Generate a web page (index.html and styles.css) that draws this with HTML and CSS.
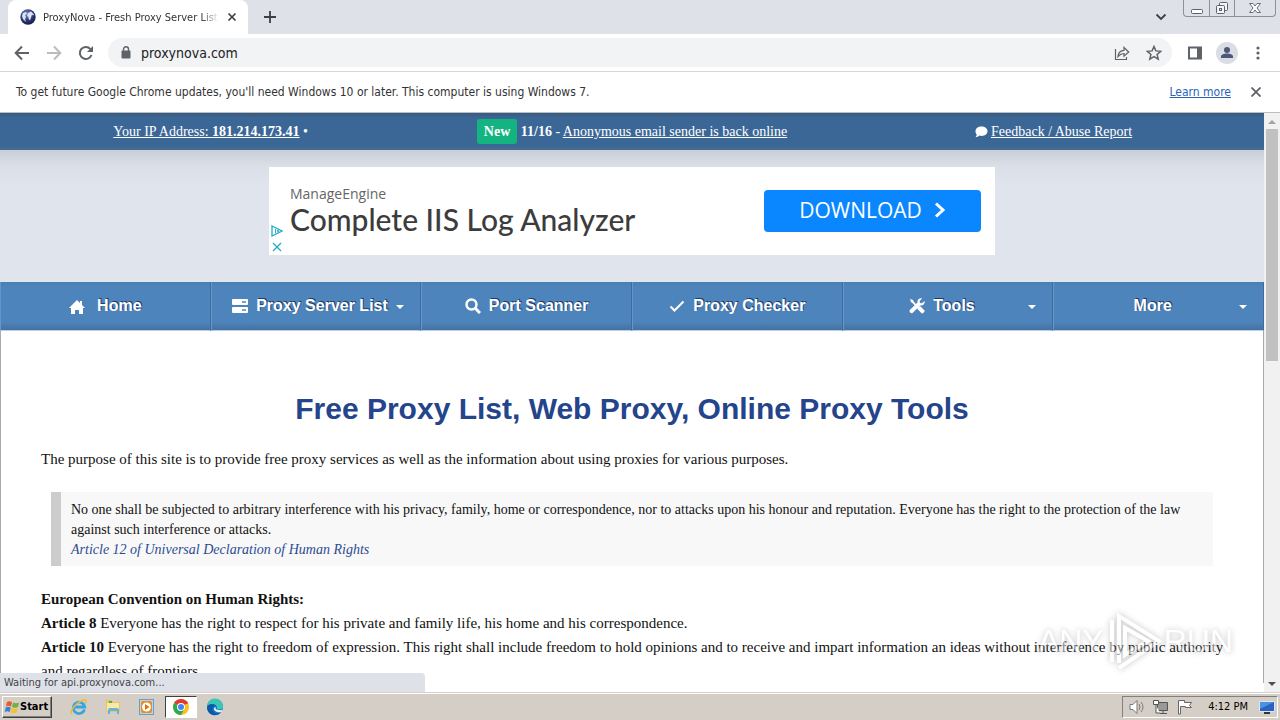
FILE: index.html
```html
<!DOCTYPE html>
<html lang="en">
<head>
    <meta charset="UTF-8">
    <meta name="viewport" content="width=device-width, initial-scale=1.0">
    <title>ProxyNova - Fresh Proxy Server List</title>
    <link rel="stylesheet" href="styles.css">
</head>
<body>
    <!-- Tab strip -->
    <header class="tab-strip">
        <div class="tab">
            <svg class="favicon" viewBox="0 0 16 16" width="16" height="16">
                <defs>
                    <radialGradient id="globe" cx="0.4" cy="0.3" r="0.7">
                        <stop offset="0" stop-color="#7385c0"/>
                        <stop offset="0.6" stop-color="#303c79"/>
                        <stop offset="1" stop-color="#171d46"/>
                    </radialGradient>
                </defs>
                <circle cx="8" cy="8" r="7.7" fill="url(#globe)"/>
                <path d="M3 4l3-1 1 2-2 1 1 2-1 2 1 3-3-3-1-3zM8 4l3-1.500 3 3-1 1-1-1-1 3-1 3-1.500-2V8L7 7z" fill="#dce5f5"/>
            </svg>
            <span class="tab-title">ProxyNova - Fresh Proxy Server List</span>
            <button class="icon-button" aria-label="Close tab">
                <svg viewBox="0 0 10 10" width="10" height="10"><path d="M1.500 1.500l7 7M8.500 1.500l-7 7" stroke="#3c4043" stroke-width="1.700"/></svg>
            </button>
        </div>
        <button class="icon-button new-tab" aria-label="New tab">
            <svg viewBox="0 0 12 12" width="12" height="12"><path d="M6 0v12M0 6h12" stroke="#3c4043" stroke-width="1.800"/></svg>
        </button>
        <button class="icon-button tab-search" aria-label="Search tabs">
            <svg viewBox="0 0 12 8" width="12" height="8"><path d="M1.500 1.500L6 6l4.500-4.500" fill="none" stroke="#3c4043" stroke-width="1.800"/></svg>
        </button>
        <div class="window-controls">
            <button aria-label="Minimize"><svg viewBox="0 0 12 14" width="12" height="14"><rect x="0.500" y="8.500" width="11" height="4" rx="1" fill="#fff" stroke="#5c616b"/></svg></button>
            <button aria-label="Restore"><svg viewBox="0 0 14 14" width="14" height="14"><g fill="#f4f5f7" stroke="#5c616b"><rect x="4.500" y="1.500" width="8" height="8" rx="1"/><rect x="1.500" y="4.500" width="8" height="8" rx="1"/><rect x="4.500" y="7.500" width="2" height="2"/></g></svg></button>
            <button aria-label="Close"><svg viewBox="0 0 14 12" width="14" height="12"><path d="M1.500 1.500h3.500l2 2.500 2-2.500h3.500l-3.500 4.500 3.500 4.500h-3.500l-2-2.500-2 2.500H1.500L5 6z" fill="#fff" stroke="#6a6f79"/></svg></button>
        </div>
    </header>

    <!-- Toolbar -->
    <div class="toolbar">
        <button class="icon-button" aria-label="Back"><svg viewBox="0 0 16 16" width="16" height="16"><path d="M15 8H2M8 1.500L1.700 8 8 14.500" fill="none" stroke="#5f6368" stroke-width="2"/></svg></button>
        <button class="icon-button" aria-label="Forward"><svg viewBox="0 0 16 16" width="16" height="16"><path d="M1 8h13M8 1.500L14.300 8 8 14.500" fill="none" stroke="#babcbe" stroke-width="2"/></svg></button>
        <button class="icon-button" aria-label="Reload"><svg viewBox="0 0 16 16" width="16" height="16"><path d="M13.500 10A6 6 0 1 1 12.300 3.900L14 5.700" fill="none" stroke="#5f6368" stroke-width="2"/><path d="M15 1v6H9z" fill="#5f6368"/></svg></button>
        <div class="omnibox">
            <svg viewBox="0 0 10 13" width="10" height="13"><path d="M2.500 5V3.300a2.500 2.500 0 0 1 5 0V5" fill="none" stroke="#5f6368" stroke-width="1.400"/><rect x="0.500" y="4.500" width="9" height="8" rx="1" fill="#5f6368"/></svg>
            <input class="url" type="text" value="proxynova.com" aria-label="Address">
            <button class="icon-button" aria-label="Share"><svg viewBox="0 0 16 16" width="16" height="16"><path d="M1.500 4v10.500h11V12M4 11.500c.4-4 2.500-6 6-6.200V2.500L14.700 7 10 11.200V8.500C7.500 8.500 6 9.300 4 11.500z" fill="none" stroke="#5f6368" stroke-width="1.200"/></svg></button>
            <button class="icon-button" aria-label="Bookmark"><svg viewBox="0 0 16 16" width="16" height="16"><path d="M8 1.500l1.900 4.400 4.800.4-3.600 3.200 1.100 4.700L8 11.700l-4.200 2.500 1.100-4.700L1.300 6.300l4.800-.4z" fill="none" stroke="#5f6368" stroke-width="1.500"/></svg></button>
        </div>
        <div class="toolbar-end">
            <button class="icon-button" aria-label="Side panel"><svg viewBox="0 0 14 14" width="14" height="14"><path d="M1 1.500h12v11H1z" fill="none" stroke="#5f6368" stroke-width="2"/><path d="M9 1h5v12H9z" fill="#5f6368"/></svg></button>
            <button class="icon-button" aria-label="Profile"><svg viewBox="0 0 22 22" width="22" height="22"><circle cx="11" cy="11" r="11" fill="#dadde3"/><circle cx="11" cy="8" r="3" fill="#4c587a"/><path d="M5 16v-1.500c0-2 3-3 6-3s6 1 6 3V16z" fill="#4c587a"/></svg></button>
            <button class="icon-button menu-button" aria-label="Menu"><svg viewBox="0 0 4 14" width="4" height="14" fill="#5f6368"><circle cx="2" cy="2" r="1.600"/><circle cx="2" cy="7" r="1.600"/><circle cx="2" cy="12" r="1.600"/></svg></button>
        </div>
    </div>

    <!-- Update notice -->
    <div class="infobar">
        <span>To get future Google Chrome updates, you'll need Windows 10 or later. This computer is using Windows 7.</span>
        <a href="#" class="learn-more">Learn more</a>
        <button class="icon-button" aria-label="Dismiss"><svg viewBox="0 0 10 10" width="10" height="10"><path d="M.5.5l9 9M9.500.5l-9 9" stroke="#5f6368" stroke-width="1.800"/></svg></button>
    </div>

    <div class="viewport">
        <main class="page">
            <div class="top-bar">
                <div><a href="#">Your IP Address: <b>181.214.173.41</b></a> •</div>
                <div><span class="badge">New</span> <b>11/16</b> - <a href="#">Anonymous email sender is back online</a></div>
                <div><svg viewBox="0 0 13 12" width="13" height="12"><path d="M6.500.5c3.400 0 6 2 6 4.700s-2.600 4.700-6 4.700c-.8 0-1.500-.1-2.200-.3C3.300 10.500 2 11.200.5 11.200c.8-.8 1.300-1.700 1.300-2.600C.9 7.700.5 6.500.5 5.200.5 2.500 3.100.5 6.500.5z" fill="#fff"/></svg> <a href="#">Feedback / Abuse Report</a></div>
            </div>

            <div class="banner">
                <div class="ad">
                    <div class="ad-choices">
                        <svg viewBox="0 0 12 12" width="12" height="12"><path d="M1 1l10 5-10 5z" fill="none" stroke="#22a9c9" stroke-width="1.300"/><path d="M4.500 4v4M6 5.200l2 .8-2 1" fill="none" stroke="#22a9c9"/></svg>
                        <svg viewBox="0 0 12 12" width="12" height="12"><path d="M2 2l8 8M10 2l-8 8" stroke="#22a9c9" stroke-width="1.300"/></svg>
                    </div>
                    <div class="ad-text">
                        <div class="ad-brand">ManageEngine</div>
                        <div class="ad-title">Complete IIS Log Analyzer</div>
                    </div>
                    <button class="download">DOWNLOAD
                        <svg viewBox="0 0 12 16" width="12" height="16"><path d="M2 1.500L9 8l-7 6.500" fill="none" stroke="#fff" stroke-width="3"/></svg>
                    </button>
                </div>
            </div>

            <nav class="menu">
                <a href="#"><span class="label home"><svg viewBox="0 0 16 16" width="16" height="16"><path d="M8 2L0 10h2v6h4v-4h4v4h4v-6h2l-3-3V3h-2v2z" fill="#fff"/></svg>Home</span></a>
                <a href="#" class="has-caret"><span class="label"><svg viewBox="0 0 16 16" width="16" height="16"><rect y="1" width="16" height="6" rx="1" fill="#fff"/><rect y="9" width="16" height="6" rx="1" fill="#fff"/><path d="M10 4h4M10 12h4" stroke="#4e84bc" stroke-width="1.500"/></svg>Proxy Server List</span><span class="caret"></span></a>
                <a href="#"><span class="label"><svg viewBox="0 0 16 16" width="16" height="16"><circle cx="6.500" cy="6.500" r="5" fill="none" stroke="#fff" stroke-width="2.400"/><path d="M10 10l5 5" stroke="#fff" stroke-width="3"/></svg>Port Scanner</span></a>
                <a href="#"><span class="label"><svg viewBox="0 0 16 16" width="16" height="16"><path d="M1.500 8.500L5.500 12.500l9-9" fill="none" stroke="#fff" stroke-width="2"/></svg>Proxy Checker</span></a>
                <a href="#" class="has-caret"><span class="label"><svg viewBox="0 0 16 16" width="16" height="16"><path d="M1 1l3 1 1 2 9 9-1.500 2L4 5.500 2 4z" fill="#fff"/><path d="M9.500 9l1.500-1 4.500 4.500c.8 1-1.800 3.500-2.800 2.800L8.500 11z" fill="#fff"/><path d="M15.500 3l-2.500 2.300-2-.3-.3-2L13 .5C10.500-.3 8 1.800 8.500 4.500L.8 12c-1 1.500 1 4 2.700 3l7.700-7.500c2.800.5 5-1.800 4.300-4.500z" fill="#fff"/></svg>Tools</span><span class="caret"></span></a>
                <a href="#" class="has-caret"><span class="label">More</span><span class="caret"></span></a>
            </nav>

            <div class="content">
                <h1>Free Proxy List, Web Proxy, Online Proxy Tools</h1>
                <p>The purpose of this site is to provide free proxy services as well as the information about using proxies for various purposes.</p>
                <blockquote>
                    No one shall be subjected to arbitrary interference with his privacy, family, home or correspondence, nor to attacks upon his honour and reputation. Everyone has the right to the protection of the law against such interference or attacks.
                    <a href="#">Article 12 of Universal Declaration of Human Rights</a>
                </blockquote>
                <p>
                    <b>European Convention on Human Rights:</b><br>
                    <b>Article 8</b> Everyone has the right to respect for his private and family life, his home and his correspondence.<br>
                    <b>Article 10</b> Everyone has the right to freedom of expression. This right shall include freedom to hold opinions and to receive and impart information an ideas without interference by public authority and regardless of frontiers.
                </p>
            </div>
        </main>

        <div class="scrollbar">
            <span class="arrow-up"></span>
            <span class="thumb"></span>
            <span class="arrow-down"></span>
        </div>

        <div class="status">Waiting for api.proxynova.com...</div>

        <div class="watermark">
            <span>ANY</span>
            <svg viewBox="0 0 60 66" width="60" height="66"><path d="M8 12v42M15 55V8l40 25-40 27M21 20v27l23-14z" fill="none" stroke="#fff" stroke-width="4"/></svg>
            <span>RUN</span>
        </div>
    </div>

    <!-- Taskbar -->
    <footer class="taskbar">
        <button class="start">
            <svg viewBox="0 0 16 16" width="16" height="16"><path d="M3 3c2-1 3-1 5 0L7 7.500c-2-1-3-1-5 0z" fill="#e85b22"/><path d="M9 3.500c2 1 4 1 6 0L14 8c-2 1-4 1-6 0z" fill="#6db33f"/><path d="M1.700 8.500c2-1 3-1 5 0l-1 4.500c-2-1-3-1-5 0z" fill="#3b7fd4"/><path d="M7.700 9c2 1 4 1 6 0l-1 4.500c-2 1-4 1-6 0z" fill="#f6c12c"/></svg>
            Start
        </button>
        <div class="tasks">
            <button aria-label="Internet Explorer"><svg viewBox="0 0 18 18" width="18" height="18"><path d="M14.500 11.500A5.700 5.700 0 1 1 14.700 9H5" fill="none" stroke="#35a6e0" stroke-width="2.800"/><path d="M2 16C-1 13 6 5 12 2.500c4-1.700 5 0 3.500 3" fill="none" stroke="#efb93a" stroke-width="1.500"/></svg></button>
            <button aria-label="Explorer"><svg viewBox="0 0 18 18" width="18" height="18"><path d="M2 2h6l1 2h7v10H2z" fill="#e9c75d"/><path d="M3 5h12v8H3z" fill="#f9e9a7"/><path d="M4 16v-4q0-2 2-2h7q2 0 2 2v4h-2v-3H6v3z" fill="#65b4df"/><path d="M5 4h3" stroke="#56a65b" stroke-width="2"/></svg></button>
            <button aria-label="Media Player"><svg viewBox="0 0 18 18" width="18" height="18"><rect x="1.500" y="1.500" width="14" height="15" fill="#b6d4eb" stroke="#6c9fc7"/><rect x="3" y="3" width="11" height="12" rx="2" fill="#f28a1c"/><circle cx="8.500" cy="9" r="4.500" fill="#fff"/><path d="M7 6l4.500 3L7 12z" fill="#e76f0b"/></svg></button>
            <button class="active" aria-label="Chrome"><svg viewBox="0 0 18 18" width="18" height="18"><circle cx="9" cy="9" r="8" fill="#fbc116"/><path d="M9 9L2.100 5A8 8 0 0 1 15.900 5z" fill="#e33b2e"/><path d="M9 9L2.100 5A8 8 0 0 0 9 17l3.500-6z" fill="#2da94f"/><path d="M9 5h6.900" stroke="#e33b2e"/><circle cx="9" cy="9" r="4" fill="#fff"/><circle cx="9" cy="9" r="3" fill="#4286f5"/></svg></button>
            <button aria-label="Edge"><svg viewBox="0 0 18 18" width="18" height="18"><circle cx="9" cy="9" r="8" fill="#1676cd"/><path d="M1 9a8 8 0 0 1 16-1c.2 3-2 4-5 3.500-1.500-.3-1-1.500-1-2.500C11 6 4 4 1 9z" fill="#3bc6b4"/><path d="M1 9c2-4 7-3.500 9-1-3-.5-4.500 2-3 5s5 3 8 1c-4 6-14 3.500-14-5z" fill="#0c59a4"/><path d="M10.500 8.500c-2 1-1.500 4.500 6 3.500l-1 2c-4 1-8-1-7.500-4z" fill="#e8f3fa"/></svg></button>
        </div>
        <div class="tray">
            <svg viewBox="0 0 16 16" width="16" height="16"><path d="M1 5.500h3l4-4v13l-4-4H1z" fill="#fff" stroke="#777"/><path d="M10 5q2 3 0 6M12 3q4 5 0 10" fill="none" stroke="#777"/></svg>
            <svg viewBox="0 0 16 16" width="16" height="16"><path d="M4.500 3.500h10v8h-10zM7 14.500h7M10 12v2" fill="#999" stroke="#555"/><path d="M.5 1.500h5v4h-5zM3 6v8h4" fill="#fff" stroke="#555"/></svg>
            <svg viewBox="0 0 16 16" width="16" height="16"><path d="M1.500 15V1.500h6v2h7l-2 3 2 2h-6v-1h-5V15z" fill="#fff" stroke="#666"/></svg>
            <time>4:12 PM</time>
            <svg viewBox="0 0 16 14" width="16" height="14"><path d="M.5 1.500h15v10H.5z" fill="#2863c4" stroke="#dce7f5"/><path d="M1 2h14L1 9z" fill="#4e90df"/><path d="M5 13h6" stroke="#333" stroke-width="2"/></svg>
        </div>
    </footer>
</body>
</html>
```
FILE: styles.css
```css
* {
    box-sizing: border-box;
}
body {
    margin: 0;
    height: 100vh;
    display: flex;
    flex-direction: column;
    overflow: hidden;
    font-family: "DejaVu Sans Condensed", "DejaVu Sans", sans-serif;
    font-size: 12px;
    color: #333;
    background: #fff;
}
button {
    padding: 0;
    border: 0;
    background: none;
    font: inherit;
    color: inherit;
}
svg {
    flex: none;
}
.icon-button {
    display: flex;
    align-items: center;
}

/* browser window */
.tab-strip {
    flex: none;
    display: flex;
    align-items: center;
    height: 34px;
    padding-left: 8px;
    background: #dee1e8;
}
.tab {
    display: flex;
    align-items: center;
    align-self: stretch;
    width: 240px;
    padding: 0 11px 0 12px;
    border-radius: 8px 8px 0 0;
    background: #fff;
}
.tab-title {
    flex: 1;
    margin: 0 8px 0 7px;
    overflow: hidden;
    white-space: nowrap;
    font-size: 11px;
    -webkit-mask-image: linear-gradient(to right, #000 90%, transparent);
    mask-image: linear-gradient(to right, #000 90%, transparent);
}
.new-tab {
    margin-left: 16px;
}
.tab-search {
    margin-left: auto;
}
.window-controls {
    display: flex;
    align-self: flex-start;
    height: 17px;
    margin: 0 4px 0 16px;
    border: 1px solid #8b909b;
    border-top: 0;
    border-radius: 0 0 4px 4px;
}
.window-controls button {
    display: flex;
    align-items: center;
    justify-content: center;
    width: 25px;
}
.window-controls button + button {
    border-left: 1px solid #8b909b;
}
.window-controls button:last-child {
    width: 41px;
}
.toolbar {
    flex: none;
    display: flex;
    align-items: center;
    gap: 16px;
    height: 38px;
    padding: 0 20px 0 14px;
    border-bottom: 1px solid #d5d7db;
}
.toolbar-end {
    display: flex;
    align-items: center;
    gap: 14px;
}
.menu-button {
    margin-left: 4px;
}
.omnibox {
    flex: 1;
    display: flex;
    align-items: center;
    gap: 10px;
    height: 29px;
    margin-left: -2px;
    padding: 0 10px 0 13px;
    border-radius: 15px;
    background: #f1f3f4;
}
.omnibox .icon-button + .icon-button {
    margin-left: 6px;
}
.url {
    flex: 1;
    padding: 0;
    border: 0;
    outline: 0;
    background: none;
    font: inherit;
    font-size: 14px;
    color: #202124;
}
.infobar {
    flex: none;
    display: flex;
    align-items: center;
    gap: 20px;
    height: 41px;
    padding: 0 19px 0 16px;
    border-bottom: 1px solid #b9bec5;
}
.learn-more {
    margin-left: auto;
    color: #2a63b8;
}

/* web page */
.viewport {
    position: relative;
    flex: 1;
    display: flex;
    min-height: 0;
}
.page {
    flex: 1;
    min-width: 0;
    overflow: hidden;
    font-family: "Liberation Serif", serif;
    font-size: 14px;
    color: #111;
}
.top-bar {
    display: grid;
    grid-template-columns: repeat(3, 1fr);
    align-items: center;
    height: 37px;
    text-align: center;
    color: #fff;
    background: linear-gradient(#395a7d, #3b6797 15%, #3b6797 90%, #4a6c90);
}
.top-bar a {
    color: #fff;
}
.top-bar svg {
    vertical-align: middle;
}
.badge {
    display: inline-block;
    padding: 0 7px;
    border-radius: 3px;
    line-height: 25px;
    font-weight: bold;
    background: #14b481;
}
.banner {
    padding: 17px 0 27px;
    background: linear-gradient(#c8cdd6, #dadfe7 15px, #e0e4ec 36px);
}
.ad {
    display: flex;
    align-items: center;
    width: 726px;
    height: 88px;
    margin: 0 auto;
    padding-right: 14px;
    background: #fff;
}
.ad-choices {
    align-self: flex-end;
    display: grid;
    gap: 4px;
    padding: 0 7px 2px 2px;
}
.ad-text {
    flex: 1;
    font-family: Lato, sans-serif;
}
.ad-brand {
    font-family: "Open Sans", sans-serif;
    font-size: 14px;
    line-height: 16px;
    color: #666;
}
.ad-title {
    font-size: 30px;
    font-weight: 500;
    line-height: 34px;
    color: #3c3c3c;
}
.download {
    display: flex;
    align-items: center;
    justify-content: center;
    gap: 12px;
    width: 217px;
    height: 42px;
    padding-bottom: 2px;
    border-radius: 4px;
    font-family: "Open Sans", sans-serif;
    font-size: 21px;
    color: #fff;
    background: #0a87ff;
}
.menu {
    display: grid;
    grid-template-columns: repeat(6, 1fr);
    font-family: "Liberation Sans", Arial, sans-serif;
    font-size: 16px;
    font-weight: bold;
}
.menu a {
    display: flex;
    align-items: center;
    height: 49px;
    border-right: 1px solid #3d6c9d;
    border-bottom: 1px solid #bcd0e5;
    border-left: 1px solid #6297ca;
    color: #fff;
    text-decoration: none;
    text-shadow: 1px -1px 0 #1f3c66;
    background: linear-gradient(#4a7eb5, #4e84bc 5px, #4e84bc 40px, #42729f);
}
.label {
    flex: 1;
    display: flex;
    align-items: center;
    justify-content: center;
    gap: 8px;
}
.home {
    gap: 12px;
}
.has-caret {
    padding: 0 16px 0 12px;
}
.caret {
    margin-top: 2px;
    border: 4px solid transparent;
    border-top-color: #fff;
    border-bottom: 0;
}
.content {
    padding: 58px 40px 0;
    border: 1px solid #aaa;
    border-width: 0 1px;
    font-size: 15px;
    line-height: 24px;
}
h1 {
    margin: 0 0 19px;
    font-family: "Liberation Sans", Arial, sans-serif;
    font-size: 30px;
    line-height: 39px;
    text-align: center;
    color: #24448c;
}
p {
    margin: 0 -20px 0 0;
}
blockquote {
    margin: 21px 10px;
    padding: 8px 10px 6px;
    border-left: 10px solid #ccc;
    font-size: 14px;
    line-height: 20px;
    background: #f8f8f8;
}
blockquote a {
    display: block;
    font-style: italic;
    color: #2d4b93;
    text-decoration: none;
}
.scrollbar {
    display: flex;
    flex-direction: column;
    align-items: center;
    width: 16px;
    padding: 7px 0 6px;
    background: #f1f1f1;
}
.arrow-up,
.arrow-down {
    border: 4px solid transparent;
}
.arrow-up {
    border-top: 0;
    border-bottom-color: #a3a3a3;
}
.arrow-down {
    margin-top: auto;
    border-bottom: 0;
    border-top-color: #505050;
}
.thumb {
    width: 12px;
    height: 41%;
    margin-top: 5px;
    background: #c1c1c1;
}
.status {
    position: absolute;
    bottom: 0;
    left: 0;
    width: 425px;
    padding-left: 4px;
    border-top-right-radius: 4px;
    font-size: 11px;
    line-height: 19px;
    color: #444;
    background: #dee1e8;
}
.watermark {
    position: absolute;
    right: 47px;
    bottom: 18px;
    display: flex;
    align-items: center;
    font-family: "Liberation Sans", Arial, sans-serif;
    font-size: 32px;
    color: #fff;
    opacity: 0.5;
    filter: drop-shadow(0 0 3px #888);
}

/* desktop */
.taskbar {
    flex: none;
    display: flex;
    align-items: center;
    height: 28px;
    padding: 0 2px;
    border-top: 1px solid #d6d0c8;
    box-shadow: inset 0 1px #fff;
    background: #d5cec6;
    color: #000;
    font-size: 11px;
}
.start {
    display: flex;
    align-items: center;
    height: 22px;
    padding: 0 3px 0 1px;
    border: 1px solid;
    border-color: #fff #404040 #404040 #fff;
    box-shadow: inset -1px -1px #808080;
    font-weight: bold;
}
.tasks {
    display: flex;
    gap: 2px;
    margin-left: 11px;
}
.tasks button {
    display: flex;
    align-items: center;
    justify-content: center;
    width: 32px;
    height: 22px;
}
.tasks .active {
    border: 1px solid;
    border-color: #404040 #fff #fff #404040;
    background: #fff;
}
.tray {
    display: flex;
    align-items: center;
    gap: 8px;
    height: 22px;
    margin-left: auto;
    padding: 0 2px 0 6px;
    border: 1px solid;
    border-color: #808080 #fff #fff #808080;
}
.tray time {
    margin: 0 3px 0 7px;
}
```
